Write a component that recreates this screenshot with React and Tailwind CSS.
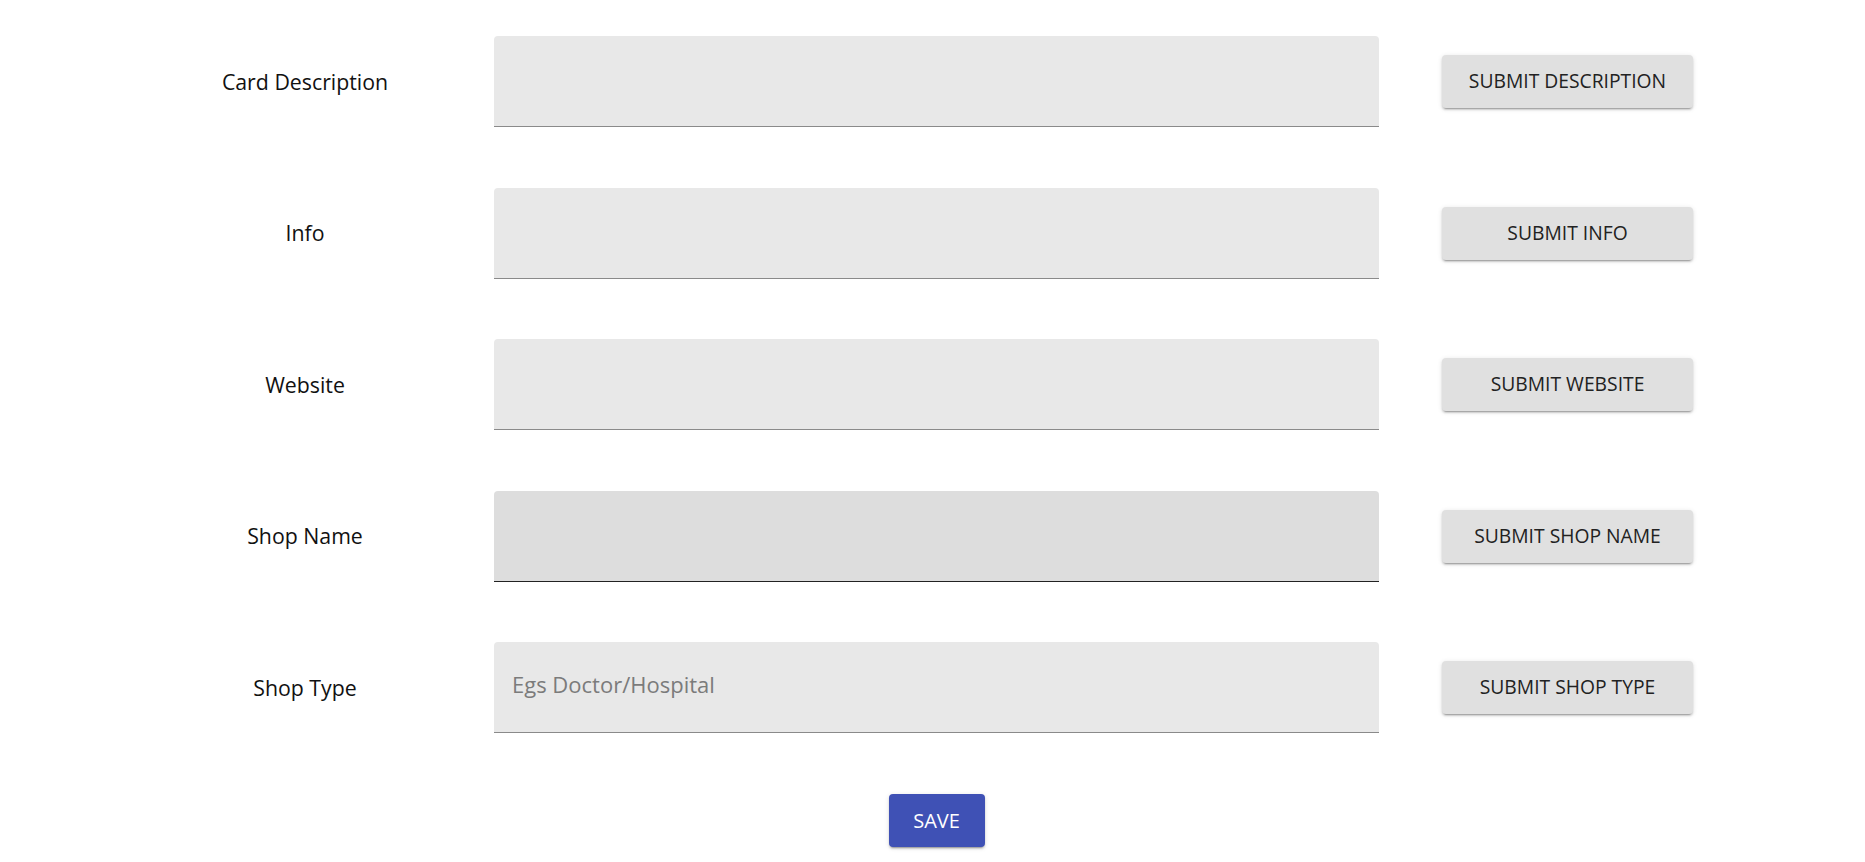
import React from "react";

const fields = [
  { label: "Card Description", button: "Submit Description" },
  { label: "Info", button: "Submit Info" },
  { label: "Website", button: "Submit Website" },
  { label: "Shop Name", button: "Submit Shop Name", hover: true },
  { label: "Shop Type", button: "Submit Shop Type", placeholder: "Egs Doctor/Hospital" },
];

const btnShadow =
  "shadow-[0_3px_1px_-2px_rgba(0,0,0,0.2),0_2px_2px_0_rgba(0,0,0,0.14),0_1px_5px_0_rgba(0,0,0,0.12)]";

export default function App() {
  return (
    <div className="min-h-screen bg-white pt-[36px] font-['Open_Sans',sans-serif]">
      <div className="flex flex-col gap-y-[60.5px]">
        {fields.map((f) => (
          <div key={f.label} className="flex items-center pl-[120px]">
            <div className="w-[370px] text-center text-[21.3px] text-[#111111]">
              {f.label}
            </div>
            <div
              className={
                "ml-[4px] flex h-[91px] w-[885px] items-center rounded-t-[4px] border-b px-[18px] pb-[5px] " +
                (f.hover
                  ? "border-[#222222] bg-[#dddddd]"
                  : "border-[#8a8a8a] bg-[#e8e8e8]")
              }
            >
              {f.placeholder && (
                <span className="text-[22px] text-[#7b7b7b]">{f.placeholder}</span>
              )}
            </div>
            <button
              className={
                "ml-[63px] h-[53px] w-[251px] rounded-[4px] bg-[#e0e0e0] text-[19.3px] uppercase text-[#222222] " +
                btnShadow
              }
            >
              {f.button}
            </button>
          </div>
        ))}
      </div>
      <div className="ml-[494px] mt-[61px] flex w-[885px] justify-center">
        <button
          className={
            "h-[53px] w-[96px] rounded-[4px] bg-[#3f51b5] text-[20px] uppercase text-white " +
            btnShadow
          }
        >
          Save
        </button>
      </div>
    </div>
  );
}
